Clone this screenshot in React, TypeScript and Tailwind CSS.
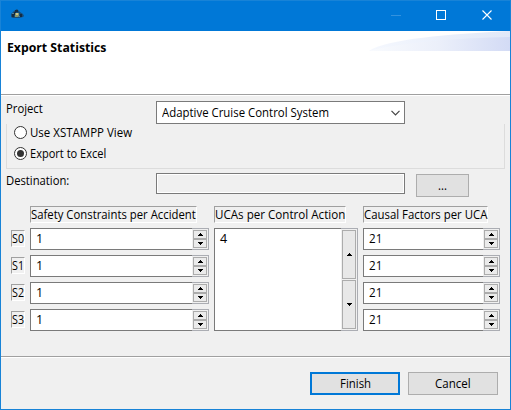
import { useLayoutEffect, useRef } from "react";

/** A single line of label text, condensed so that it fills the given width. */
function Label({ text, width, className = "" }: { text: string; width: number; className?: string }) {
  const ref = useRef<HTMLSpanElement>(null);
  useLayoutEffect(() => {
    const el = ref.current;
    if (!el) return;
    el.style.transform = `scaleX(${width / el.offsetWidth})`;
  }, [text, width]);
  return (
    <span style={{ width }} className={`block h-4 shrink-0 whitespace-nowrap leading-4 ${className}`}>
      <span ref={ref} className="inline-block origin-left">
        {text}
      </span>
    </span>
  );
}

function Arrow({ up = false }: { up?: boolean }) {
  return (
    <svg width="5" height="3" viewBox="0 0 5 3" shapeRendering="crispEdges" className="block shrink-0">
      <path d={up ? "M2 0h1v1h1v1h1v1H0V2h1V1h1z" : "M0 0h5v1H4v1H3v1H2V2H1V1H0z"} fill="#000" />
    </svg>
  );
}

function SpinButtons() {
  return (
    <div className="flex w-[17px] shrink-0 flex-col border-y border-r border-[#abadb3] bg-[#f0f0f0] p-px">
      <div className="flex w-[14px] flex-1 items-center justify-center border border-[#acacac] bg-[#ebebeb]">
        <Arrow up />
      </div>
      <div className="flex w-[14px] flex-1 items-center justify-center border border-[#acacac] bg-[#ebebeb]">
        <Arrow />
      </div>
    </div>
  );
}

function Spinner({ value, width }: { value: string; width: number }) {
  return (
    <div className="flex h-[22px] w-full">
      <div className="flex min-w-0 flex-1 items-center border-y border-l border-[#7a7a7a] bg-white pl-[5px]">
        <Label text={value} width={width} />
      </div>
      <SpinButtons />
    </div>
  );
}

function Sunken({ text, width, className }: { text: string; width: number; className: string }) {
  return (
    <div className={`flex h-[17px] items-center border border-t-[#a0a0a0] border-r-white border-b-white border-l-[#a0a0a0] ${className}`}>
      <Label text={text} width={width} />
    </div>
  );
}

function Radio({ text, width, checked = false }: { text: string; width: number; checked?: boolean }) {
  return (
    <div className="flex h-[21px] items-center">
      <div className="mr-[3px] flex size-[13px] items-center justify-center rounded-full border border-[#333] bg-white">
        {checked && <div className="size-[7px] rounded-full bg-[#333]" />}
      </div>
      <Label text={text} width={width} />
    </div>
  );
}

const rows = ["S0", "S1", "S2", "S3"];

export default function App() {
  return (
    <div className="flex h-[410px] w-[511px] flex-col overflow-hidden border border-[#1883d7] bg-[#f0f0f0] font-['Open_Sans','Noto_Sans',sans-serif] text-[12.5px] text-black">
      <header className="flex h-[30px] shrink-0 items-start bg-[#0078d7]">
        <svg width="14" height="10" viewBox="0 0 14 10" className="mt-[8px] ml-[9px]">
          <path d="M1 5l3-3 3-2 3 3 3 2 1 2-1 1-4 1H3L1 8z" fill="#174d7a" />
          <path d="M2 5h2v3H2zM5 1h3v2H5zM10 5h2v3h-2zM4 3h2v3H4z" fill="#152b42" />
          <path d="M5 4h4v4H5z" fill="#8b9868" />
          <path d="M6 4h2v2H6z" fill="#cbc694" />
          <path d="M2 4h2v1H2zM8 7h2v1H8z" fill="#477f9e" />
        </svg>
        <svg width="102" height="10" viewBox="0 0 102 10" shapeRendering="crispEdges" className="mt-[9px] mr-[17px] ml-auto">
          <path d="M0 5.5h10" stroke="#3392df" />
          <rect x="45.5" y=".5" width="9" height="9" fill="none" stroke="#fff" />
          <path d="M91.5 .5l9 9M100.500 .5l-9 9" stroke="#fff" strokeWidth="1.1" shapeRendering="geometricPrecision" />
        </svg>
      </header>

      <section className="flex h-[63px] shrink-0 items-start justify-between bg-white">
        <Label text="Export Statistics" width={99} className="mt-[9px] ml-[6px] font-bold" />
        <svg width="141" height="20" viewBox="0 0 141 20" className="shrink-0">
          <defs>
            <linearGradient id="sweep">
              <stop offset="0" stopColor="#f9fbfe" />
              <stop offset=".5" stopColor="#ebeffa" />
              <stop offset="1" stopColor="#d3dbf5" />
            </linearGradient>
            <linearGradient id="sweepLight">
              <stop offset="0" stopColor="#f5f8fe" />
              <stop offset="1" stopColor="#e1e8f8" />
            </linearGradient>
          </defs>
          <path d="M0 20C17 8 80 3 141 0V20z" fill="url(#sweepLight)" />
          <path d="M0 20C34 11 87 7 141 6V20z" fill="url(#sweep)" />
        </svg>
      </section>
      <div className="h-[2px] shrink-0 border-t border-[#a0a0a0] bg-white" />

      <main className="flex h-[260px] shrink-0 flex-col pt-[5px] pl-[5px]">
        <div className="flex h-[23px]">
          <Label text="Project" width={37} />
          <div className="ml-[113px] flex w-[249px] items-center justify-between border border-[#7a7a7a] bg-white pr-1 pl-[5px]">
            <Label text="Adaptive Cruise Control System" width={167} />
            <svg width="9" height="6" viewBox="0 0 9 6">
              <path d="M.5 .8l4 4 4-4" fill="none" stroke="#444" strokeWidth="1.2" />
            </svg>
          </div>
        </div>
        <div className="h-[45px] w-[499px] border-x border-b border-[#dcdcdc] pl-[7px]">
          <div className="-mt-[2px]">
            <Radio text="Use XSTAMPP View" width={102} />
            <Radio text="Export to Excel" width={76} checked />
          </div>
        </div>
        <div className="mt-1 flex items-start">
          <Label text="Destination:" width={63} />
          <div className="ml-[87px] h-[21px] w-[249px] border border-[#7a7a7a] shadow-[inset_0_0_0_1px_white]" />
          <div className="mt-px ml-[11px] flex h-[23px] w-[53px] items-center justify-center border border-[#adadad] bg-[#e1e1e1]">
            <Label text="..." width={9} />
          </div>
        </div>
        <div className="mt-[9px] flex items-start pl-[5px]">
          <div className="flex w-[19px] flex-col gap-[10px] pt-[24px]">
            {rows.map((row) => (
              <Sunken key={row} text={row} width={12} className="w-[14px]" />
            ))}
          </div>
          <div className="w-[179px]">
            <Sunken text="Safety Constraints per Accident" width={165} className="w-[167px]" />
            <div className="mt-[5px] flex flex-col gap-[5px]">
              {rows.map((row) => (
                <Spinner key={row} value="1" width={7} />
              ))}
            </div>
          </div>
          <div className="ml-[5px] w-[144px]">
            <Sunken text="UCAs per Control Action" width={130} className="w-[132px]" />
            <div className="mt-[5px] flex h-[103px]">
              <div className="flex-1 border-y border-l border-[#7a7a7a] bg-white pt-[2px] pl-[5px]">
                <Label text="4" width={7} />
              </div>
              <div className="flex w-[17px] flex-col gap-px border-y border-r border-[#abadb3] p-px">
                <div className="flex w-[14px] flex-1 items-center justify-center border border-[#acacac] bg-[#e8e8e8]">
                  <Arrow up />
                </div>
                <div className="flex w-[14px] flex-1 items-center justify-center border border-[#acacac] bg-[#e8e8e8]">
                  <Arrow />
                </div>
              </div>
            </div>
          </div>
          <div className="ml-[5px] w-[137px]">
            <Sunken text="Causal Factors per UCA" width={123} className="w-[125px]" />
            <div className="mt-[5px] flex flex-col gap-[5px]">
              {rows.map((row) => (
                <Spinner key={row} value="21" width={13} />
              ))}
            </div>
          </div>
        </div>
      </main>

      <div className="h-[2px] shrink-0 border-t border-[#a0a0a0] bg-white" />
      <footer className="flex flex-1 items-start justify-end gap-2 pt-[14px] pr-[12px]">
        <button className="flex h-[23px] w-[90px] items-center justify-center border-2 border-[#0078d7] bg-[#e1e1e1]">
          <Label text="Finish" width={31} className="text-left" />
        </button>
        <button className="flex h-[23px] w-[90px] items-center justify-center border border-[#adadad] bg-[#e1e1e1]">
          <Label text="Cancel" width={36} className="text-left" />
        </button>
      </footer>
    </div>
  );
}
